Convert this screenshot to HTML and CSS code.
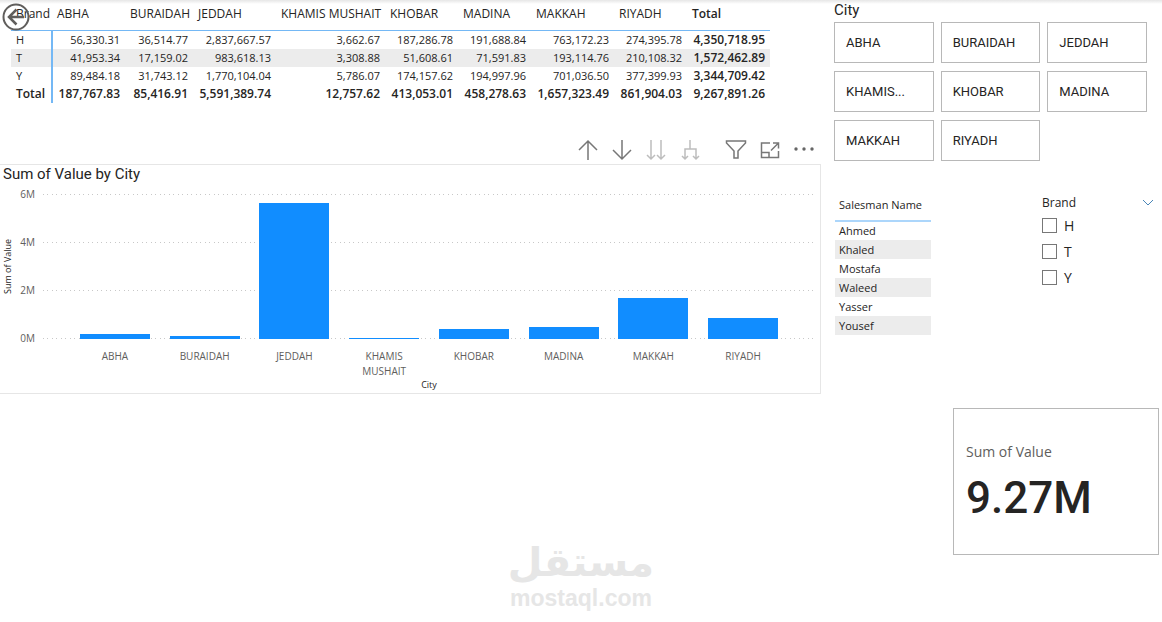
FILE: index.html
```
<!DOCTYPE html>
<html lang="en">
<head>
    <meta charset="UTF-8">
    <meta name="viewport" content="width=device-width, initial-scale=1.0">
    <title>Sales Report</title>
    <link rel="stylesheet" href="styles.css">
</head>
<body>
    <button class="back-button" type="button" aria-label="Back">
        <svg width="30" height="30" viewBox="0 0 30 30" fill="none" stroke="#605e5c" stroke-width="2">
            <circle cx="15" cy="15" r="12.5"/>
            <path d="M23 15H8M15.5 7.5L8 15l7.5 7.5" stroke-width="2.5"/>
        </svg>
    </button>

    <main class="report">
        <div class="main-column">
            <table class="matrix">
                <colgroup>
                    <col class="col-brand"><col class="col-m"><col class="col-s"><col class="col-l"><col class="col-xl">
                    <col class="col-m"><col class="col-m"><col class="col-l"><col class="col-m"><col class="col-l">
                </colgroup>
                <thead>
                    <tr><th>Brand</th><th>ABHA</th><th>BURAIDAH</th><th>JEDDAH</th><th>KHAMIS MUSHAIT</th><th>KHOBAR</th><th>MADINA</th><th>MAKKAH</th><th>RIYADH</th><th class="total">Total</th></tr>
                </thead>
                <tbody>
                    <tr><th>H</th><td>56,330.31</td><td>36,514.77</td><td>2,837,667.57</td><td>3,662.67</td><td>187,286.78</td><td>191,688.84</td><td>763,172.23</td><td>274,395.78</td><td class="total">4,350,718.95</td></tr>
                    <tr class="alt"><th>T</th><td>41,953.34</td><td>17,159.02</td><td>983,618.13</td><td>3,308.88</td><td>51,608.61</td><td>71,591.83</td><td>193,114.76</td><td>210,108.32</td><td class="total">1,572,462.89</td></tr>
                    <tr><th>Y</th><td>89,484.18</td><td>31,743.12</td><td>1,770,104.04</td><td>5,786.07</td><td>174,157.62</td><td>194,997.96</td><td>701,036.50</td><td>377,399.93</td><td class="total">3,344,709.42</td></tr>
                    <tr class="total"><th>Total</th><td>187,767.83</td><td>85,416.91</td><td>5,591,389.74</td><td>12,757.62</td><td>413,053.01</td><td>458,278.63</td><td>1,657,323.49</td><td>861,904.03</td><td>9,267,891.26</td></tr>
                </tbody>
            </table>

            <div class="toolbar">
                <button type="button" aria-label="Drill up">
                    <svg viewBox="0 0 24 24"><path d="M12 22V3M3 12l9-9 9 9"/></svg>
                </button>
                <button type="button" aria-label="Drill down">
                    <svg viewBox="0 0 24 24"><path d="M12 2v19M3 12l9 9 9-9"/></svg>
                </button>
                <button class="muted" type="button" aria-label="Go to the next level">
                    <svg viewBox="0 0 24 24"><path d="M7 2v19M3 17l4 4 4-4M17 2v19M13 17l4 4 4-4"/></svg>
                </button>
                <button class="muted" type="button" aria-label="Expand all down one level">
                    <svg viewBox="0 0 24 24"><path d="M12 2v9M7 21V11h11v10M4 18l3 3 3-3M15 18l3 3 3-3"/></svg>
                </button>
                <button class="filter" type="button" aria-label="Filters">
                    <svg viewBox="0 0 24 24"><path d="M2.5 3h19v2l-7.500 8v7h-4v-7l-7.500-8z"/></svg>
                </button>
                <button type="button" aria-label="Focus mode">
                    <svg viewBox="0 0 24 24"><path d="M12 5H3.500v14.500h17V13M15 5h5.500v5.500M20.500 5L13 12.500M3.500 14.500H11v5"/></svg>
                </button>
                <button type="button" aria-label="More options">
                    <svg class="dots" viewBox="0 0 24 24"><circle cx="4" cy="11" r="1.7"/><circle cx="12" cy="11" r="1.7"/><circle cx="20" cy="11" r="1.7"/></svg>
                </button>
            </div>

            <section class="chart">
                <h2>Sum of Value by City</h2>
                <div class="chart-body">
                    <div class="y-title">Sum of Value</div>
                    <div class="y-axis"><span>6M</span><span>4M</span><span>2M</span><span>0M</span></div>
                    <div class="plot">
                        <div class="bar" style="height: 3.13%"></div>
                        <div class="bar" style="height: 1.42%"></div>
                        <div class="bar" style="height: 93.19%"></div>
                        <div class="bar" style="height: 0.21%"></div>
                        <div class="bar" style="height: 6.88%"></div>
                        <div class="bar" style="height: 7.64%"></div>
                        <div class="bar" style="height: 27.62%"></div>
                        <div class="bar" style="height: 14.37%"></div>
                    </div>
                    <div class="x-axis">
                        <span>ABHA</span><span>BURAIDAH</span><span>JEDDAH</span><span>KHAMIS MUSHAIT</span><span>KHOBAR</span><span>MADINA</span><span>MAKKAH</span><span>RIYADH</span>
                    </div>
                    <div class="x-title">City</div>
                </div>
            </section>
        </div>

        <div class="side-column">
            <section class="city-slicer">
                <h2>City</h2>
                <div class="tiles">
                    <button type="button">ABHA</button>
                    <button type="button">BURAIDAH</button>
                    <button type="button">JEDDAH</button>
                    <button type="button">KHAMIS...</button>
                    <button type="button">KHOBAR</button>
                    <button type="button">MADINA</button>
                    <button type="button">MAKKAH</button>
                    <button type="button">RIYADH</button>
                </div>
            </section>

            <div class="side-row">
                <table class="salesmen">
                    <thead>
                        <tr><th>Salesman Name</th></tr>
                    </thead>
                    <tbody>
                        <tr><td>Ahmed</td></tr>
                        <tr><td>Khaled</td></tr>
                        <tr><td>Mostafa</td></tr>
                        <tr><td>Waleed</td></tr>
                        <tr><td>Yasser</td></tr>
                        <tr><td>Yousef</td></tr>
                    </tbody>
                </table>

                <section class="brand-slicer">
                    <div class="brand-header">
                        <h3>Brand</h3>
                        <button type="button" aria-label="Collapse">
                            <svg width="12" height="8" viewBox="0 0 12 8" fill="none" stroke="#4a86b8"><path d="M1 1l5 5 5-5"/></svg>
                        </button>
                    </div>
                    <label><input type="checkbox"> H</label>
                    <label><input type="checkbox"> T</label>
                    <label><input type="checkbox"> Y</label>
                </section>
            </div>

            <section class="card">
                <p class="card-label">Sum of Value</p>
                <p class="card-value">9.27M</p>
            </section>
        </div>
    </main>

    <div class="watermark">
        <span class="watermark-ar" lang="ar" dir="rtl">مستقل</span>
        <span class="watermark-en">mostaql.com</span>
    </div>
</body>
</html>
```
FILE: styles.css
```
* {
    box-sizing: border-box;
}
body {
    margin: 0;
    min-height: 100vh;
    position: relative;
    font-family: "Open Sans", "Noto Sans", sans-serif;
    font-size: 11px;
    color: #252423;
    background: linear-gradient(#e6e6e6, #fff 4px) no-repeat #fff;
}
h2, h3, p {
    margin: 0;
    font-weight: normal;
}
button {
    padding: 0;
    border: 0;
    background: none;
    color: inherit;
    font-family: inherit;
}
svg {
    display: block;
}
.back-button {
    position: absolute;
    top: 2px;
    left: 1px;
}
.report {
    display: grid;
    grid-template-columns: minmax(0, 821fr) minmax(0, 341fr);
}

/* matrix */
.matrix {
    margin-left: 11px;
    table-layout: fixed;
    width: 758px;
    border-collapse: collapse;
}
.col-brand { width: 41px; }
.col-s { width: 68px; }
.col-m { width: 73px; }
.col-l { width: 83px; }
.col-xl { width: 109px; }
.matrix th,
.matrix td {
    height: 18px;
    padding: 0 5px;
    line-height: 18px;
    font-weight: normal;
    text-align: right;
    white-space: nowrap;
}
.matrix th {
    text-align: left;
}
.matrix thead th {
    height: 30px;
    padding-bottom: 2px;
    border-bottom: 1px solid #74b8f5;
    font-size: 12px;
}
.matrix tbody th {
    border-right: 2px solid #74b8f5;
}
.matrix .alt {
    background-color: #ececec;
}
.matrix tr.total th,
.matrix tr.total td,
.matrix .total {
    font-size: 12px;
    font-weight: 600;
}
.matrix thead th.total {
    font-weight: 600;
}

/* visual header */
.toolbar {
    display: flex;
    justify-content: flex-end;
    gap: 10px;
    margin-top: 35px;
    padding-right: 5px;
}
.toolbar svg {
    width: 24px;
    height: 24px;
    fill: none;
    stroke: #777;
    stroke-width: 1.5;
}
.toolbar .muted svg {
    stroke: #bdbdbd;
}
.toolbar .filter {
    margin-left: 12px;
}
.toolbar .dots {
    fill: #666;
    stroke: none;
}

/* column chart */
.chart {
    margin-top: 2px;
    border: 1px solid #e6e6e6;
    border-left: 0;
}
.chart h2 {
    padding-left: 3px;
    font-family: Roboto, sans-serif;
    font-size: 15px;
    line-height: 19px;
}
.chart-body {
    display: grid;
    grid-template-columns: 15px 20px minmax(0, 1fr);
    grid-template-rows: 145px auto auto;
    padding: 10px 5px 2px 0;
}
.y-title {
    writing-mode: vertical-rl;
    transform: rotate(180deg);
    font-size: 9px;
    line-height: 15px;
    text-align: center;
}
.y-axis {
    display: flex;
    flex-direction: column;
    justify-content: space-between;
    margin: -7px 0;
    line-height: 14px;
    text-align: right;
    font-size: 10px;
    color: #605e5c;
}
/* dotted gridlines every 48px */
.plot {
    display: grid;
    grid-template-columns: repeat(8, 1fr);
    align-items: end;
    justify-items: center;
    margin-left: 8px;
    padding: 0 27px;
    background-image:
        repeating-linear-gradient(transparent 0 1px, #fff 1px 48px),
        repeating-linear-gradient(90deg, #c8c8c8 0 1px, transparent 1px 4px, #c8c8c8 4px 5px, transparent 5px 9px);
}
.bar {
    width: 78%;
    min-height: 1px;
    background-color: #118dff;
}
.x-axis {
    grid-column: 3;
    display: grid;
    grid-template-columns: repeat(8, 1fr);
    margin-left: 8px;
    padding: 10px 27px 0;
    text-align: center;
    line-height: 15px;
    font-size: 10px;
    color: #605e5c;
}
.x-axis span {
    padding: 0 16px;
}
.x-title {
    grid-column: 3;
    margin-left: 8px;
    font-size: 9px;
    line-height: 12px;
    text-align: center;
}

/* city slicer */
.side-column {
    padding: 0 3px 0 13px;
}
.city-slicer {
    padding-right: 12px;
}
.city-slicer h2 {
    font-family: Roboto, sans-serif;
    font-size: 15px;
    line-height: 20px;
}
.tiles {
    display: grid;
    grid-template-columns: repeat(3, minmax(0, 1fr));
    gap: 8px 7px;
    margin-top: 2px;
}
.tiles button {
    height: 41px;
    padding-left: 11px;
    border: 1px solid #b8b8b8;
    text-align: left;
    font-family: Roboto, sans-serif;
    font-size: 13px;
}

/* salesman table and brand slicer */
.side-row {
    display: flex;
    justify-content: space-between;
    align-items: flex-start;
    margin-top: 30px;
    padding: 0 5px 0 1px;
}
.salesmen {
    width: 96px;
    border-collapse: collapse;
}
.salesmen th,
.salesmen td {
    height: 19px;
    padding: 0 4px;
    line-height: 18px;
    font-weight: normal;
    text-align: left;
    white-space: nowrap;
}
.salesmen th {
    height: 30px;
    padding-bottom: 2px;
    border-bottom: 2px solid #acd6fb;
}
.salesmen tr:nth-child(even) {
    background-color: #ececec;
}
.brand-slicer {
    width: 112px;
}
.brand-header {
    display: flex;
    justify-content: space-between;
    align-items: center;
    padding-top: 2px;
}
.brand-header h3 {
    font-size: 12px;
    font-weight: 500;
    line-height: 19px;
}
.brand-slicer label {
    display: flex;
    align-items: center;
    gap: 7px;
    height: 26px;
    font-size: 14px;
}
.brand-slicer input {
    appearance: none;
    width: 15px;
    height: 15px;
    margin: 0;
    border: 1px solid #777;
}

/* card */
.card {
    width: 206px;
    height: 147px;
    margin: 73px 0 0 auto;
    padding: 32px 12px;
    border: 1px solid #b8b8b8;
}
.card-label {
    font-size: 14px;
    line-height: 22px;
    color: #605e5c;
}
.card-value {
    font-family: Roboto, sans-serif;
    font-size: 44px;
    font-weight: 500;
    line-height: 70px;
}

/* watermark */
.watermark {
    position: absolute;
    bottom: 11px;
    left: 0;
    right: 0;
    display: flex;
    flex-direction: column;
    align-items: center;
    font-weight: bold;
    color: #e6e6e6;
    pointer-events: none;
}
.watermark-ar {
    font-family: "DejaVu Sans", sans-serif;
    font-size: 40px;
    line-height: 46px;
}
.watermark-en {
    font-family: "Liberation Sans", sans-serif;
    font-size: 23px;
    line-height: 26px;
}
```
